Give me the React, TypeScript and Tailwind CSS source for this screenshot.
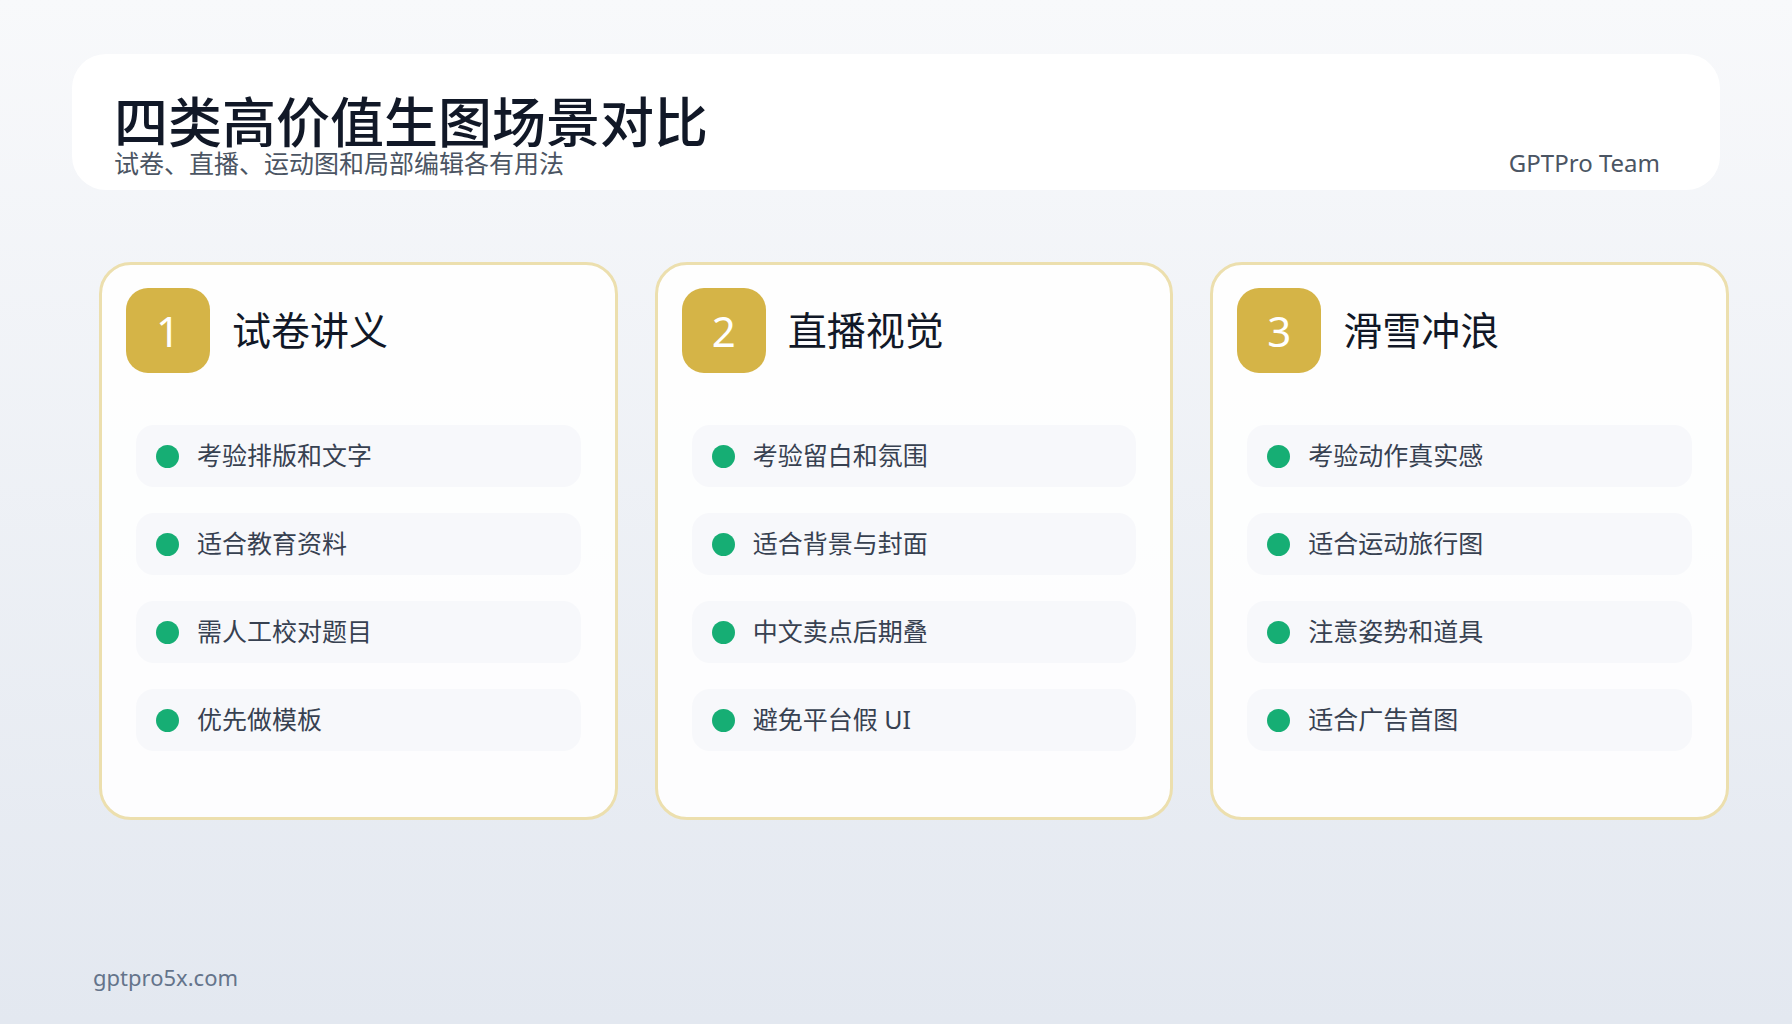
const cards = [
  { n: "1", title: "试卷讲义", items: ["考验排版和文字", "适合教育资料", "需人工校对题目", "优先做模板"] },
  { n: "2", title: "直播视觉", items: ["考验留白和氛围", "适合背景与封面", "中文卖点后期叠", "避免平台假 UI"] },
  { n: "3", title: "滑雪冲浪", items: ["考验动作真实感", "适合运动旅行图", "注意姿势和道具", "适合广告首图"] },
];

export default function App() {
  return (
    <div
      className="w-[1792px] h-[1024px] overflow-hidden bg-gradient-to-b from-[#f8f9fb] to-[#e3e8f0] flex flex-col"
      style={{ fontFamily: '"Noto Sans", "Noto Sans CJK SC", sans-serif' }}
    >
      <div className="mx-[72px] mt-[54px] h-[136px] rounded-[34px] bg-white flex items-end justify-between pl-[42px] pr-[60px] pb-[14px]">
        <div className="flex flex-col">
          <h1 className="text-[54px] leading-[56px] font-medium text-[#111827]">四类高价值生图场景对比</h1>
          <p className="text-[25px] leading-[26px] text-[#4b5563]">试卷、直播、运动图和局部编辑各有用法</p>
        </div>
        <span className="text-[24px] leading-[26px] text-[#4b5563]">GPTPro Team</span>
      </div>

      <div className="mt-[72px] ml-[99px] mr-[63px] grid grid-cols-3 gap-[37px]">
        {cards.map((c) => (
          <div key={c.n} className="h-[558px] rounded-[32px] border-[3px] border-[#ecdfae] bg-white/90 px-[24px] pt-[23px]">
            <div className="flex items-center gap-[22px]">
              <div className="w-[84px] h-[85px] rounded-[22px] bg-[#d5b447] flex items-center justify-center text-white text-[42px]">
                {c.n}
              </div>
              <span className="text-[39px] text-[#111827]">{c.title}</span>
            </div>
            <div className="mt-[52px] mx-[10px] flex flex-col gap-[26px]">
              {c.items.map((it) => (
                <div key={it} className="h-[62px] rounded-[18px] bg-[#f7f8fb] flex items-center px-[20px] gap-[18px]">
                  <span className="w-[23px] h-[23px] rounded-full bg-[#16ae74]" />
                  <span className="text-[25px] text-[#374151]">{it}</span>
                </div>
              ))}
            </div>
          </div>
        ))}
      </div>

      <div className="mt-auto mb-[30px] ml-[93px] text-[22px] text-[#64748b]">gptpro5x.com</div>
    </div>
  );
}
